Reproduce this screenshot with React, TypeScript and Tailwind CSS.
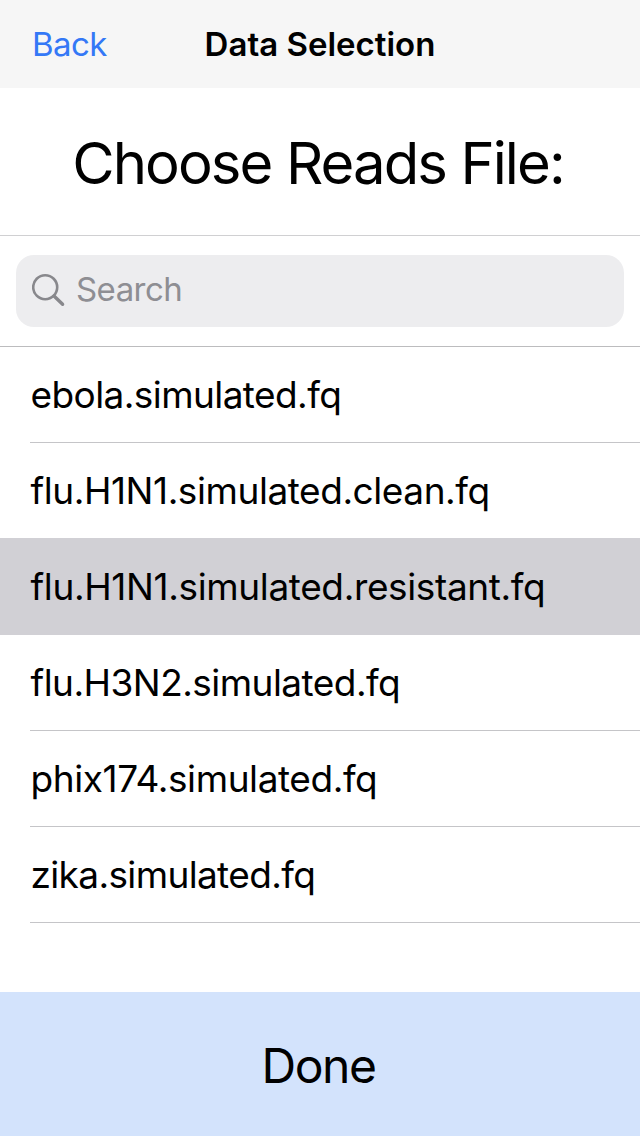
const files = [
  { name: 'ebola.simulated.fq', tracking: 'tracking-[-0.58px]' },
  { name: 'flu.H1N1.simulated.clean.fq', tracking: 'tracking-[-0.44px]' },
  { name: 'flu.H1N1.simulated.resistant.fq', tracking: 'tracking-[-0.37px]', selected: true },
  { name: 'flu.H3N2.simulated.fq', tracking: 'tracking-[-0.54px]' },
  { name: 'phix174.simulated.fq', tracking: 'tracking-[-0.42px]' },
  { name: 'zika.simulated.fq', tracking: 'tracking-[-0.64px]' },
];

export default function App() {
  return (
    <main className="flex h-[1136px] w-[640px] flex-col bg-white font-['Inter',sans-serif] text-black">
      <header className="grid h-[88px] shrink-0 grid-cols-[1fr_auto_1fr] items-center bg-[#f6f6f6] pt-0.5">
        <button className="justify-self-start pl-8 text-[33px] tracking-[-0.6px] text-[#3478f6]">Back</button>
        <h1 className="text-[33px] font-semibold">Data Selection</h1>
      </header>
      <div className="flex h-[148px] shrink-0 items-center justify-center border-b border-[#d0d0d2] pt-[3px] pr-1">
        <h2 className="text-[58px] tracking-[-1.9px]">Choose Reads File:</h2>
      </div>
      <div className="h-[111px] shrink-0 border-b border-[#bcbcbe] px-4 pt-[19px]">
        <label className="flex h-[72px] items-center rounded-[18px] bg-[#ededef] pl-4">
          <svg className="h-9 w-9" viewBox="0 0 36 36" fill="none" stroke="#88888c">
            <circle cx="13.2" cy="14.2" r="12" strokeWidth="2.6" />
            <path d="m22 23 8.6 8.3" strokeWidth="3.4" strokeLinecap="round" />
          </svg>
          <span className="pb-[3px] pl-2 text-[33px] tracking-[-0.55px] text-[#8e8e93]">Search</span>
        </label>
      </div>
      <ul className="flex-1">
        {files.map((f) => (
          <li
            key={f.name}
            className={f.selected ? 'relative -mt-px flex h-[97px] bg-[#d1d0d5] pl-[30px]' : 'flex h-24 pl-[30px]'}
          >
            <span
              className={`flex flex-1 items-center border-b pl-[0.5px] text-[37px] ${f.tracking} ${f.selected ? 'border-transparent pt-px' : 'border-[#c5c5c8]'}`}
            >
              {f.name}
            </span>
          </li>
        ))}
      </ul>
      <button className="h-36 shrink-0 bg-[#d3e3fc] pt-1 pr-[3px] text-[48px] tracking-[-1.5px]">Done</button>
    </main>
  );
}
